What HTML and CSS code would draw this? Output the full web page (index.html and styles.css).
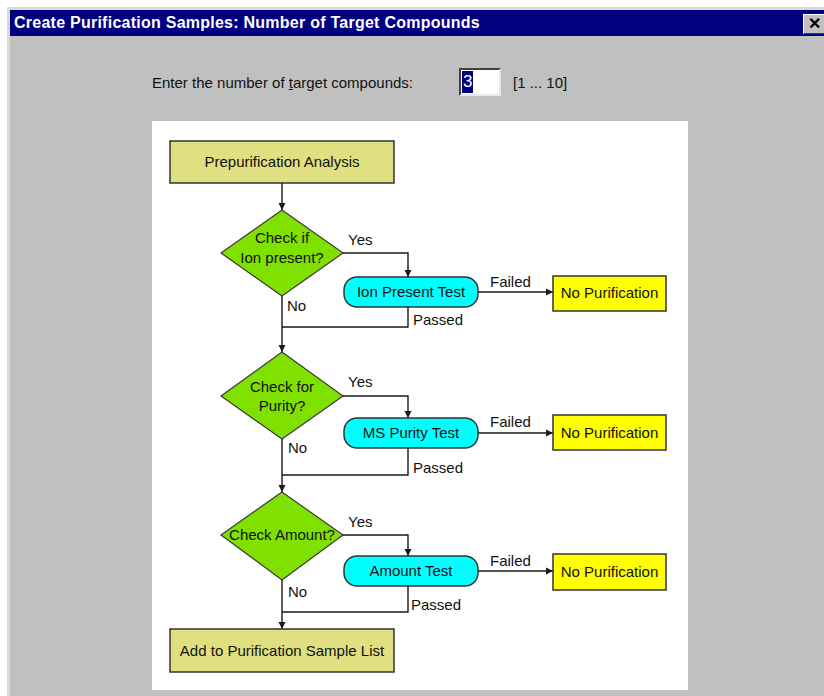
FILE: index.html
```html
<!DOCTYPE html>
<html lang="en">
<head>
    <meta charset="UTF-8">
    <title>Create Purification Samples</title>
    <link rel="stylesheet" href="styles.css">
</head>
<body>

    <div class="dialog">
        <div class="titlebar">
            <span class="title">Create Purification Samples: Number of Target Compounds</span>
            <span class="close-btn">&#x2715;</span>
        </div>

        <div class="content">
            <div class="count-row">
                <label class="count-label" for="count">Enter the number of <u>t</u>arget compounds:</label>
                <div class="count-input" id="count"><span class="sel">3</span></div>
                <span class="count-range">[1 ... 10]</span>
            </div>

            <div class="chart-panel">
                <svg class="chart" width="536" height="569" viewBox="0 0 536 569">
                    <defs>
                        <marker id="arrow" markerUnits="userSpaceOnUse" markerWidth="8" markerHeight="8" refX="7" refY="4" orient="auto">
                            <path d="M0,0.5 L7,4 L0,7.5 z" fill="#1a1a1a"/>
                        </marker>
                    </defs>

                    <!-- start -->
                    <rect class="box" x="18" y="20" width="224" height="42"/>
                    <text class="mid" x="130" y="46">Prepurification Analysis</text>
                    <line class="link" x1="130" y1="62" x2="130" y2="89" marker-end="url(#arrow)"/>

                    <!-- step 1: ion present -->
                    <polygon class="decision" points="130,89 191,132 130,175 69,132"/>
                    <text class="mid" x="130" y="122">Check if</text>
                    <text class="mid" x="130" y="142">Ion present?</text>
                    <polyline class="link" points="191,132 256,132 256,156" marker-end="url(#arrow)"/>
                    <text x="196" y="124">Yes</text>
                    <rect class="test" x="192" y="156" width="134" height="30" rx="13"/>
                    <text class="mid" x="259" y="176">Ion Present Test</text>
                    <line class="link" x1="326" y1="171" x2="401" y2="171" marker-end="url(#arrow)"/>
                    <text x="338" y="166">Failed</text>
                    <rect class="stop" x="401" y="155" width="113" height="35"/>
                    <text class="mid" x="457.5" y="177">No Purification</text>
                    <polyline class="link" points="256,186 256,206 130,206"/>
                    <text x="261" y="204">Passed</text>
                    <text x="135" y="190">No</text>
                    <line class="link" x1="130" y1="175" x2="130" y2="231" marker-end="url(#arrow)"/>

                    <!-- step 2: purity -->
                    <polygon class="decision" points="130,231 191,275 130,318 69,275"/>
                    <text class="mid" x="130" y="271">Check for</text>
                    <text class="mid" x="130" y="290">Purity?</text>
                    <polyline class="link" points="191,275 256,275 256,297" marker-end="url(#arrow)"/>
                    <text x="196" y="266">Yes</text>
                    <rect class="test" x="192" y="297" width="134" height="30" rx="13"/>
                    <text class="mid" x="259" y="317">MS Purity Test</text>
                    <line class="link" x1="326" y1="312" x2="401" y2="312" marker-end="url(#arrow)"/>
                    <text x="338" y="306">Failed</text>
                    <rect class="stop" x="401" y="294" width="113" height="35"/>
                    <text class="mid" x="457.5" y="317">No Purification</text>
                    <polyline class="link" points="256,327 256,354 130,354"/>
                    <text x="261" y="352">Passed</text>
                    <text x="136" y="332">No</text>
                    <line class="link" x1="130" y1="318" x2="130" y2="371" marker-end="url(#arrow)"/>

                    <!-- step 3: amount -->
                    <polygon class="decision" points="130,371 191,414 130,459 69,414"/>
                    <text class="mid" x="130" y="419">Check Amount?</text>
                    <polyline class="link" points="191,414 256,414 256,435" marker-end="url(#arrow)"/>
                    <text x="196" y="406">Yes</text>
                    <rect class="test" x="192" y="435" width="134" height="30" rx="13"/>
                    <text class="mid" x="259" y="455">Amount Test</text>
                    <line class="link" x1="326" y1="450" x2="401" y2="450" marker-end="url(#arrow)"/>
                    <text x="338" y="445">Failed</text>
                    <rect class="stop" x="401" y="433" width="113" height="36"/>
                    <text class="mid" x="457.5" y="456">No Purification</text>
                    <polyline class="link" points="256,465 256,491 130,491"/>
                    <text x="259" y="489">Passed</text>
                    <text x="136" y="476">No</text>
                    <line class="link" x1="130" y1="459" x2="130" y2="508" marker-end="url(#arrow)"/>

                    <!-- end -->
                    <rect class="box" x="18" y="508" width="224" height="43"/>
                    <text class="mid" x="130" y="535">Add to Purification Sample List</text>
                </svg>
            </div>
        </div>
    </div>

</body>
</html>
```

FILE: styles.css
```css
/* styles.css */
body {
    margin: 0;
    background-color: #ffffff;
    font-family: "Liberation Sans", Arial, sans-serif;
    overflow: hidden;
}

.dialog {
    margin: 7px 0 0 7px;
    height: 700px;
    background-color: #c0c0c0;
    border-top: 3px solid #d9d9d9;
    border-left: 3px solid #d9d9d9;
}

.titlebar {
    height: 26px;
    background-color: #000080;
    display: flex;
    align-items: center;
    justify-content: space-between;
    padding-left: 4px;
}

.title {
    color: white;
    font-weight: bold;
    font-size: 16px;
    letter-spacing: 0.25px;
}

.close-btn {
    width: 20px;
    height: 18px;
    margin-top: 2px;
    background-color: #c0c0c0;
    border-top: 1px solid #ffffff;
    border-left: 1px solid #ffffff;
    border-bottom: 1px solid #404040;
    font-size: 16px;
    font-weight: bold;
    line-height: 18px;
    text-align: center;
    color: #000;
}

.content {
    padding: 32px 0 0 142px;
}

.count-row {
    display: flex;
    align-items: center;
    height: 28px;
}

.count-label {
    width: 307px;
    font-size: 15px;
    color: #111;
}

.count-input {
    width: 37px;
    height: 24px;
    background-color: white;
    border-top: 2px solid #404040;
    border-left: 2px solid #404040;
    border-right: 2px solid #e8e8e8;
    border-bottom: 2px solid #e8e8e8;
    display: flex;
    align-items: center;
    padding-left: 1px;
}

.count-input .sel {
    background-color: #000080;
    color: white;
    font-size: 17px;
    line-height: 22px;
    padding: 0 1px;
}

.count-range {
    margin-left: 12px;
    font-size: 15px;
    color: #111;
}

.chart-panel {
    margin-top: 25px;
    width: 536px;
    height: 569px;
    background-color: white;
}

.chart {
    display: block;
    font-family: "Liberation Sans", Arial, sans-serif;
    font-size: 15px;
}

.chart text {
    fill: #111;
}

.chart text.mid {
    text-anchor: middle;
}

.box {
    fill: #e0e080;
    stroke: #333;
    stroke-width: 1.5;
}

.decision {
    fill: #80e000;
    stroke: #3a3a3a;
    stroke-width: 1.2;
}

.test {
    fill: #00ffff;
    stroke: #333;
    stroke-width: 1.5;
}

.stop {
    fill: #ffff00;
    stroke: #333;
    stroke-width: 1.5;
}

.link {
    fill: none;
    stroke: #1a1a1a;
    stroke-width: 1.4;
}
```
